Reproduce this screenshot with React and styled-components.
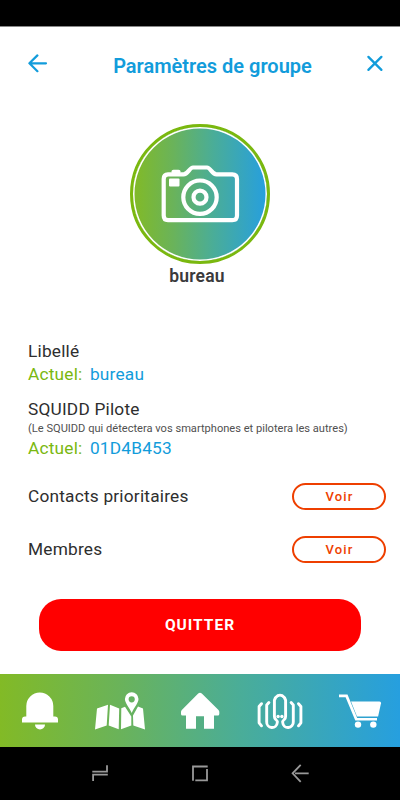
import styled, { createGlobalStyle } from 'styled-components'

const colors = {
  blue: '#129cdb',
  green: '#7ab80f',
  orange: '#ee3f00',
  red: '#ff0000',
  text: '#2e2e2e',
}

const gradient = 'linear-gradient(90deg, #82ba26 0%, #6ab35a 30%, #4aad98 60%, #269fdf 100%)'

const App = () => (
  <>
    <GlobalStyle />
    <Screen>
      <StatusBar />
      <Header>
        <IconButton aria-label="Retour">
          <BackIcon />
        </IconButton>
        <Title>Paramètres de groupe</Title>
        <IconButton aria-label="Fermer">
          <CloseIcon />
        </IconButton>
      </Header>

      <Profile>
        <Avatar>
          <CameraIcon />
        </Avatar>
        <GroupName>bureau</GroupName>
      </Profile>

      <Settings>
        <Field>
          <Label>Libellé</Label>
          <Current>
            Actuel: <Value>bureau</Value>
          </Current>
        </Field>
        <Field>
          <Label>SQUIDD Pilote</Label>
          <Hint>(Le SQUIDD qui détectera vos smartphones et pilotera les autres)</Hint>
          <Current>
            Actuel: <Value>01D4B453</Value>
          </Current>
        </Field>
        <Row>
          <Label>Contacts prioritaires</Label>
          <OutlineButton>Voir</OutlineButton>
        </Row>
        <Row>
          <Label>Membres</Label>
          <OutlineButton>Voir</OutlineButton>
        </Row>
      </Settings>

      <QuitButton>QUITTER</QuitButton>

      <TabBar>
        {[BellIcon, MapIcon, HomeIcon, SquidIcon, CartIcon].map((Icon, index) => (
          <Tab key={index}>
            <Icon />
          </Tab>
        ))}
      </TabBar>
      <SystemBar>
        <RecentsIcon />
        <SquareIcon />
        <SystemBackIcon />
      </SystemBar>
    </Screen>
  </>
)

export default App

const BackIcon = () => (
  <Stroke width="20" height="20" viewBox="0 0 20 20" $width={2.2}>
    <path d="M18 10.300H1.400M9.400 2.400 1.400 10.300l8 7.900" />
  </Stroke>
)

const CloseIcon = () => (
  <Stroke width="20" height="20" viewBox="0 0 20 20" $width={2.3}>
    <path d="m3.400 3.900 13 13M16.400 3.900l-13 13" />
  </Stroke>
)

const CameraIcon = () => (
  <Stroke width="80" height="60" viewBox="0 0 80 60" $width={4.2}>
    <path d="M8 10.300h15.500c4.500 0 6-6.800 9.500-6.800h14c3.500 0 5 6.800 9.500 6.800h15.800q4.700 0 4.700 4.700v36.500q0 4.700-4.700 4.700H8q-4.300 0-4.300-4.700V15q0-4.700 4.300-4.700z" />
    <path d="M13.500 7.800h5" />
    <circle cx="40" cy="33.200" r="16.700" />
    <circle cx="40" cy="33.200" r="6.500" />
    <rect x="9" y="14.500" width="10.500" height="8" rx="1" fill="currentColor" stroke="none" />
  </Stroke>
)

const BellIcon = () => (
  <Solid width="60" height="40" viewBox="0 0 60 40">
    <path d="M16.300 25.500V15a13.500 13.500 0 0 1 27 0v10.500h1.600a3.100 3.100 0 0 1 3.100 3.100v2.900H12v-2.900a3.100 3.100 0 0 1 3.100-3.100z" />
    <path d="M25 33.500h10a5 5 0 0 1-10 0z" />
  </Solid>
)

const MapIcon = () => (
  <Solid width="60" height="40" viewBox="0 0 60 40">
    <path d="M7 17.500 18 13.800 16.700 34.500 5 38.500zM20 13.800 29.200 17.500 28.700 38.200 18.700 34.500zM31.300 17.300 35 15.800 41.300 25.500V34.500L31 38.200zM43 24.500 48 15.500 53 17.500 55 38.500 43.300 34.500z" />
    <path
      fillRule="evenodd"
      d="M41.700 1.300a6.800 6.800 0 0 1 6.800 6.800c0 4-4.500 8.500-6.800 14-2.300-5.500-6.800-10-6.800-14a6.800 6.800 0 0 1 6.800-6.800zm0 3.900a3.100 3.100 0 1 0 0 6.200 3.100 3.100 0 0 0 0-6.200z"
    />
  </Solid>
)

const HomeIcon = () => (
  <Solid width="60" height="40" viewBox="0 0 60 40">
    <path d="M28.200 2.500q1.800-1.500 3.600 0L48.500 19q.8.800.8 2v2q0 1.500-1.500 1.500H44v13.300H34V25.200h-8v12.600H16V24.500h-3.500Q11 24.500 11 23v-2q0-1.200.8-2z" />
  </Solid>
)

const SquidIcon = () => (
  <Stroke width="60" height="40" viewBox="0 0 60 40" $width={2.9}>
    <path d="M11.500 12.700 9.100 15.500v16.300l2.400 3M48.500 12.700l2.400 2.800v16.300l-2.400 3" />
    <path d="m18.900 11.500-2.200 2.500v16.800a5.300 5.300 0 0 0 10.600.7q.3-1.500-1.500-3-1.400-1-1.400-3V9.200q1-3 3.600-4.600 2-1 4 0 2.600 1.600 3.600 4.600v16.300q0 2-1.400 3-1.800 1.500-1.500 3a5.300 5.300 0 0 0 10.600-.7V14l-2.200-2.500" />
    <g fill="currentColor" stroke="none">
      <circle cx="28.100" cy="25.500" r="1.700" />
      <circle cx="31.900" cy="25.500" r="1.700" />
    </g>
  </Stroke>
)

const CartIcon = () => (
  <Solid width="60" height="40" viewBox="0 0 60 40">
    <path d="M9 3.400h8.500L27.200 27H47v2.500H25.300L15.600 6.200H9z" />
    <path d="M21 10.500h28.500q1.700 0 1.500 1.700l-2.900 13.300H27z" />
    <circle cx="28" cy="33.600" r="3.200" />
    <circle cx="43.300" cy="33.600" r="3.200" />
  </Solid>
)

const RecentsIcon = () => (
  <Thin width="20" height="20" viewBox="0 0 20 20">
    <path d="M17 2.300v6.400H2.300M3.100 18v-6.300h14.700" />
  </Thin>
)

const SquareIcon = () => (
  <Thin width="20" height="20" viewBox="0 0 20 20">
    <path d="M17.700 3.500H3v14.300M5.300 17.300H17V6" />
  </Thin>
)

const SystemBackIcon = () => (
  <Thin width="20" height="20" viewBox="0 0 20 20">
    <path d="M18.700 10.300H5M10.700 1.800 2.600 10.300l8.100 8.500" />
  </Thin>
)

const GlobalStyle = createGlobalStyle`
  * {
    box-sizing: border-box;
  }

  body {
    margin: 0;
    font-family: Roboto, sans-serif;
    color: ${colors.text};
    background: #fff;
  }

  button {
    font-family: inherit;
    cursor: pointer;
  }

  svg {
    display: block;
  }
`

const Screen = styled.div`
  display: flex;
  flex-direction: column;
  width: 400px;
  height: 800px;
  overflow: hidden;
  background: #fff;
`

const StatusBar = styled.div`
  height: 27px;
  background: #000;
  border-bottom: 1px solid #888;
`

const Header = styled.header`
  display: flex;
  justify-content: space-between;
  height: 97px;
  padding: 26px 15px 0 28px;
`

const IconButton = styled.button`
  width: 20px;
  height: 20px;
  padding: 0;
  border: 0;
  background: none;
  color: ${colors.blue};
`

const Title = styled.h1`
  margin: 0;
  padding: 1px 0 0 12px;
  font-size: 20px;
  line-height: 24px;
  font-weight: 600;
  color: ${colors.blue};
`

const Profile = styled.section`
  display: flex;
  flex-direction: column;
  align-items: center;
  height: 216px;
`

const Avatar = styled.div`
  display: flex;
  justify-content: center;
  width: 140px;
  height: 140px;
  padding-top: 37px;
  border: 3.5px solid ${colors.green};
  border-radius: 50%;
  color: #fff;
  background: ${gradient} padding-box;
  box-shadow: inset 0 0 0 1.5px #fff;
`

const GroupName = styled.h2`
  margin: 2px 0 0;
  padding-right: 6px;
  font-size: 17.5px;
  line-height: 20px;
  font-weight: 600;
  letter-spacing: 0.2px;
  color: #3a3a3c;
`

const Settings = styled.section`
  display: flex;
  flex-direction: column;
  height: 259px;
  padding: 0 14px 0 28px;
`

const Field = styled.div`
  margin-bottom: 12px;

  & + & {
    margin-bottom: 10px;
  }
`

const Label = styled.p`
  margin: 0;
  font-size: 17.3px;
  line-height: 22px;
  font-weight: 370;
  letter-spacing: 0.2px;
`

const Current = styled(Label)`
  line-height: 24px;
  color: ${colors.green};
`

const Value = styled.span`
  margin-left: 3px;
  color: ${colors.blue};
`

const Hint = styled.p`
  margin: 0;
  padding-top: 1px;
  font-size: 11.1px;
  line-height: 15px;
  color: #505050;
`

const Row = styled.div`
  display: flex;
  align-items: center;
  justify-content: space-between;
  height: 53px;

  ${Label} {
    padding-bottom: 1px;
  }
`

const OutlineButton = styled.button`
  width: 94px;
  height: 27px;
  padding: 0 0 0 1px;
  border: 2px solid ${colors.orange};
  border-radius: 14px;
  background: #fff;
  font-size: 13px;
  font-weight: 470;
  letter-spacing: 1.2px;
  color: ${colors.orange};
`

const QuitButton = styled.button`
  width: 322px;
  height: 52px;
  margin: 0 auto 23px 39px;
  border: 0;
  border-radius: 22px;
  background: ${colors.red};
  font-size: 15.5px;
  font-weight: 700;
  letter-spacing: 1px;
  color: #fff;
`

const TabBar = styled.nav`
  display: grid;
  grid-template-columns: repeat(5, 1fr);
  align-items: center;
  height: 73px;
  background: ${gradient};
`

const Tab = styled.div`
  display: flex;
  justify-content: center;
  color: #fff;
`

const SystemBar = styled.div`
  display: flex;
  justify-content: center;
  gap: 80px;
  flex: 1;
  padding-top: 16px;
  color: #999;
  background: #000;
`

const Solid = styled.svg`
  fill: currentColor;
`

const Stroke = styled.svg`
  fill: none;
  stroke: currentColor;
  stroke-width: ${({ $width }) => $width};
  stroke-linecap: round;
  stroke-linejoin: round;
`

const Thin = styled.svg`
  fill: none;
  stroke: currentColor;
  stroke-width: 1.8;
`
